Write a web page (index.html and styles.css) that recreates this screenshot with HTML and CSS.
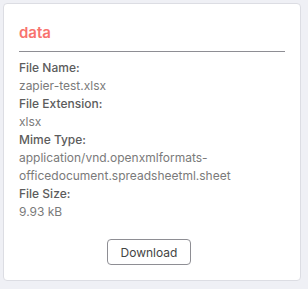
FILE: index.html
```html
<!DOCTYPE html>
<html lang="en">
<head>
    <meta charset="UTF-8">
    <title>data</title>
    <link rel="stylesheet" href="styles.css">
</head>
<body>
    <div class="card">
        <h2 class="card-title">data</h2>
        <dl class="fields">
            <dt>File Name:</dt>
            <dd>zapier-test.xlsx</dd>
            <dt>File Extension:</dt>
            <dd>xlsx</dd>
            <dt>Mime Type:</dt>
            <dd>application/vnd.openxmlformats-officedocument.spreadsheetml.sheet</dd>
            <dt>File Size:</dt>
            <dd>9.93 kB</dd>
        </dl>
        <div class="actions">
            <button type="button">Download</button>
        </div>
    </div>
</body>
</html>
```

FILE: styles.css
```css
body {
    font-family: 'Inter', sans-serif;
    background-color: #eff0f5;
    color: #555;
    margin: 0;
    padding: 3px 7px 0 3px;
    font-size: 12px;
}
.card {
    background-color: #fff;
    border: 1px solid #dcdde3;
    border-radius: 4px;
    padding: 20px 15px 16px 15px;
    height: 278px;
    box-sizing: border-box;
}
.card-title {
    margin: 0;
    padding-bottom: 9px;
    font-size: 15px;
    font-weight: 600;
    color: #f8736e;
    border-bottom: 1px solid #8e8e94;
    line-height: 18px;
}
.fields {
    margin: 7px 0 0;
    line-height: 18px;
}
.fields dt {
    font-weight: 500;
    color: #5c5c5c;
}
.fields dd {
    margin: 0;
    color: #7a7a7a;
}
.actions {
    text-align: center;
    margin-top: 18px;
    padding-right: 6px;
}
button {
    font-family: 'Inter', sans-serif;
    font-size: 12px;
    color: #444;
    background-color: #fff;
    border: 1px solid #8e8e94;
    border-radius: 4px;
    padding: 4px 13px;
    height: 26px;
}
```
